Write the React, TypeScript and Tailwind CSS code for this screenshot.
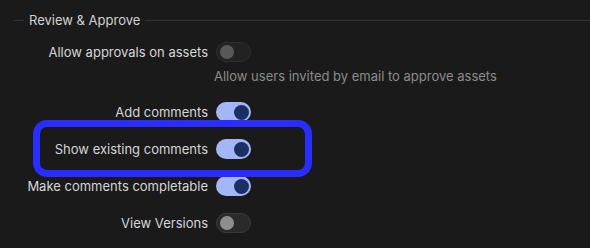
import React from 'react';

type RowProps = {
  label: string;
  on: boolean;
  disabled?: boolean;
};

// simple switch, visual only
function Switch({ on, disabled }: { on: boolean; disabled?: boolean }) {
  if (on) {
    return (
      <div className="flex h-[20px] w-[35px] shrink-0 items-center justify-end rounded-full bg-[#a3b6f8] pr-[2px]">
        <div className="h-[15px] w-[15px] rounded-full bg-[#1a2f62]" />
      </div>
    );
  }
  if (disabled) {
    return (
      <div className="flex h-[20px] w-[35px] shrink-0 items-center rounded-full border border-[#2e2e2e] bg-[#222222] pl-[3px]">
        <div className="h-[14px] w-[14px] rounded-full bg-[#585858]" />
      </div>
    );
  }
  return (
    <div className="flex h-[20px] w-[35px] shrink-0 items-center rounded-full border border-[#3a3a3a] bg-[#2a2a2a] pl-[3px]">
      <div className="h-[14px] w-[14px] rounded-full bg-[#8e8e8e]" />
    </div>
  );
}

function Row({ label, on, disabled }: RowProps) {
  return (
    <div className="grid h-[20px] grid-cols-[208px_auto] items-center gap-[8px]">
      <span className="text-right text-[13px] leading-[20px] text-[#d6d6d6]">{label}</span>
      <Switch on={on} disabled={disabled} />
    </div>
  );
}

export default function App() {
  return (
    <div className="relative h-[248px] w-[590px] overflow-hidden bg-[#1a1a1a] pt-[10px] font-['Inter',sans-serif]">
      <div className="flex h-[20px] items-center gap-[5px] pl-[14px]">
        <div className="h-px w-[10px] bg-[#333333]" />
        <span className="text-[13px] leading-[20px] text-[#d2d2d2]">Review &amp; Approve</span>
        <div className="h-px flex-1 bg-[#333333]" />
      </div>

      <div className="mt-[12px]">
        <Row label="Allow approvals on assets" on={false} disabled />
        <div className="mt-[4px] pl-[214px] text-[13px] leading-[20px] text-[#8c8c8c]">
          Allow users invited by email to approve assets
        </div>
      </div>

      <div className="mt-[16px] flex flex-col gap-[17px]">
        <Row label="Add comments" on={true} />
        <Row label="Show existing comments" on={true} />
        <Row label="Make comments completable" on={true} />
        <Row label="View Versions" on={false} />
      </div>

      {/* highlight annotation around the "Show existing comments" row */}
      <div className="pointer-events-none absolute left-[33px] top-[120px] h-[57px] w-[279px] rounded-[14px] border-[7px] border-[#2a2dff]" />
    </div>
  );
}
